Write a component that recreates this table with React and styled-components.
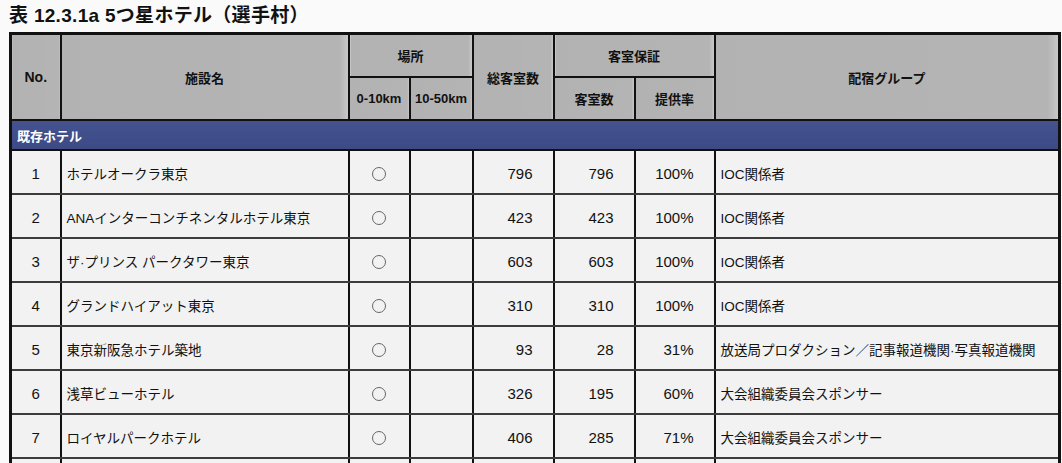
import React from 'react';
import styled, { createGlobalStyle } from 'styled-components';

const GlobalStyle = createGlobalStyle`
  html, body {
    margin: 0;
    padding: 0;
    background: #fafafa;
    overflow: hidden;
  }
  body {
    font-family: "Liberation Sans", "Noto Sans CJK JP", sans-serif;
    color: #111;
  }
`;

const Page = styled.div`
  padding: 5px 0 0 9px;
`;

const Title = styled.h1`
  margin: 0 0 5px;
  font-size: 19px;
  line-height: 22px;
  font-weight: bold;
  letter-spacing: 0.3px;
`;

const Table = styled.table`
  border-collapse: collapse;
  table-layout: fixed;
  width: 1049px;
  border: 3px solid #111;
`;

const HeadCell = styled.th`
  background: linear-gradient(90deg, #b2b2b2 0%, #b4b4b4 97%, #c8c8c8 100%);
  font-size: ${(p) => (p.$big ? '14px' : '13px')};
  font-weight: bold;
  color: #111;
  padding: 0;
  height: 41px;
  border: 2px solid #111;
  border-bottom: ${(p) => (p.$thin ? '1px solid #444' : '2px solid #111')};
  text-align: center;
  vertical-align: middle;
`;

const SectionCell = styled.td`
  background: linear-gradient(180deg, #44528f 0%, #3c4a86 100%);
  color: #fff;
  font-size: 13px;
  font-weight: bold;
  height: 28px;
  padding: 0 0 0 5px;
  border-top: 2px solid #111;
  border-bottom: 2px solid #111;
`;

const Cell = styled.td`
  background: #f2f2f2;
  font-size: ${(p) => (p.$num ? '15px' : '13.5px')};
  height: 40px;
  padding: ${(p) => (p.$align === 'right' ? '2px 20px 0 0' : p.$align === 'left' ? '2px 0 0 5px' : '2px 0 0')};
  text-align: ${(p) => p.$align || 'center'};
  border-left: 2px solid #111;
  border-right: 2px solid #111;
  border-bottom: 2px solid #3c3c3c;
  white-space: nowrap;
  overflow: hidden;
`;

const Circle = styled.span`
  display: inline-block;
  width: 12px;
  height: 12px;
  border: 1px solid #666;
  border-radius: 50%;
  vertical-align: middle;
  margin-top: 1px;
`;

const widths = [50, 288, 61, 63, 81, 81, 80, 345];

const hotels = [
  { no: 1, name: 'ホテルオークラ東京', total: 796, rooms: 796, rate: '100%', group: 'IOC関係者' },
  { no: 2, name: 'ANAインターコンチネンタルホテル東京', total: 423, rooms: 423, rate: '100%', group: 'IOC関係者' },
  { no: 3, name: 'ザ·プリンス パークタワー東京', total: 603, rooms: 603, rate: '100%', group: 'IOC関係者' },
  { no: 4, name: 'グランドハイアット東京', total: 310, rooms: 310, rate: '100%', group: 'IOC関係者' },
  { no: 5, name: '東京新阪急ホテル築地', total: 93, rooms: 28, rate: '31%', group: '放送局プロダクション／記事報道機関·写真報道機関' },
  { no: 6, name: '浅草ビューホテル', total: 326, rooms: 195, rate: '60%', group: '大会組織委員会スポンサー' },
  { no: 7, name: 'ロイヤルパークホテル', total: 406, rooms: 285, rate: '71%', group: '大会組織委員会スポンサー' },
];

export default function App() {
  return (
    <Page>
      <GlobalStyle />
      <Title>表 12.3.1a 5つ星ホテル（選手村）</Title>
      <Table>
        <colgroup>
          {widths.map((w, i) => (
            <col key={i} style={{ width: w }} />
          ))}
        </colgroup>
        <thead>
          <tr>
            <HeadCell rowSpan={2} $big>No.</HeadCell>
            <HeadCell rowSpan={2}>施設名</HeadCell>
            <HeadCell colSpan={2} $thin>場所</HeadCell>
            <HeadCell rowSpan={2}>総客室数</HeadCell>
            <HeadCell colSpan={2} $thin>客室保証</HeadCell>
            <HeadCell rowSpan={2}>配宿グループ</HeadCell>
          </tr>
          <tr>
            <HeadCell>0-10km</HeadCell>
            <HeadCell>10-50km</HeadCell>
            <HeadCell>客室数</HeadCell>
            <HeadCell>提供率</HeadCell>
          </tr>
        </thead>
        <tbody>
          <tr>
            <SectionCell colSpan={8}>既存ホテル</SectionCell>
          </tr>
          {hotels.map((h) => (
            <tr key={h.no}>
              <Cell $num>{h.no}</Cell>
              <Cell $align="left">{h.name}</Cell>
              <Cell><Circle /></Cell>
              <Cell />
              <Cell $align="right" $num>{h.total}</Cell>
              <Cell $align="right" $num>{h.rooms}</Cell>
              <Cell $align="right" $num>{h.rate}</Cell>
              <Cell $align="left">{h.group}</Cell>
            </tr>
          ))}
          {/* next row starts at the bottom edge of the frame */}
          <tr>
            {widths.map((w, i) => (
              <Cell key={i} />
            ))}
          </tr>
        </tbody>
      </Table>
    </Page>
  );
}
